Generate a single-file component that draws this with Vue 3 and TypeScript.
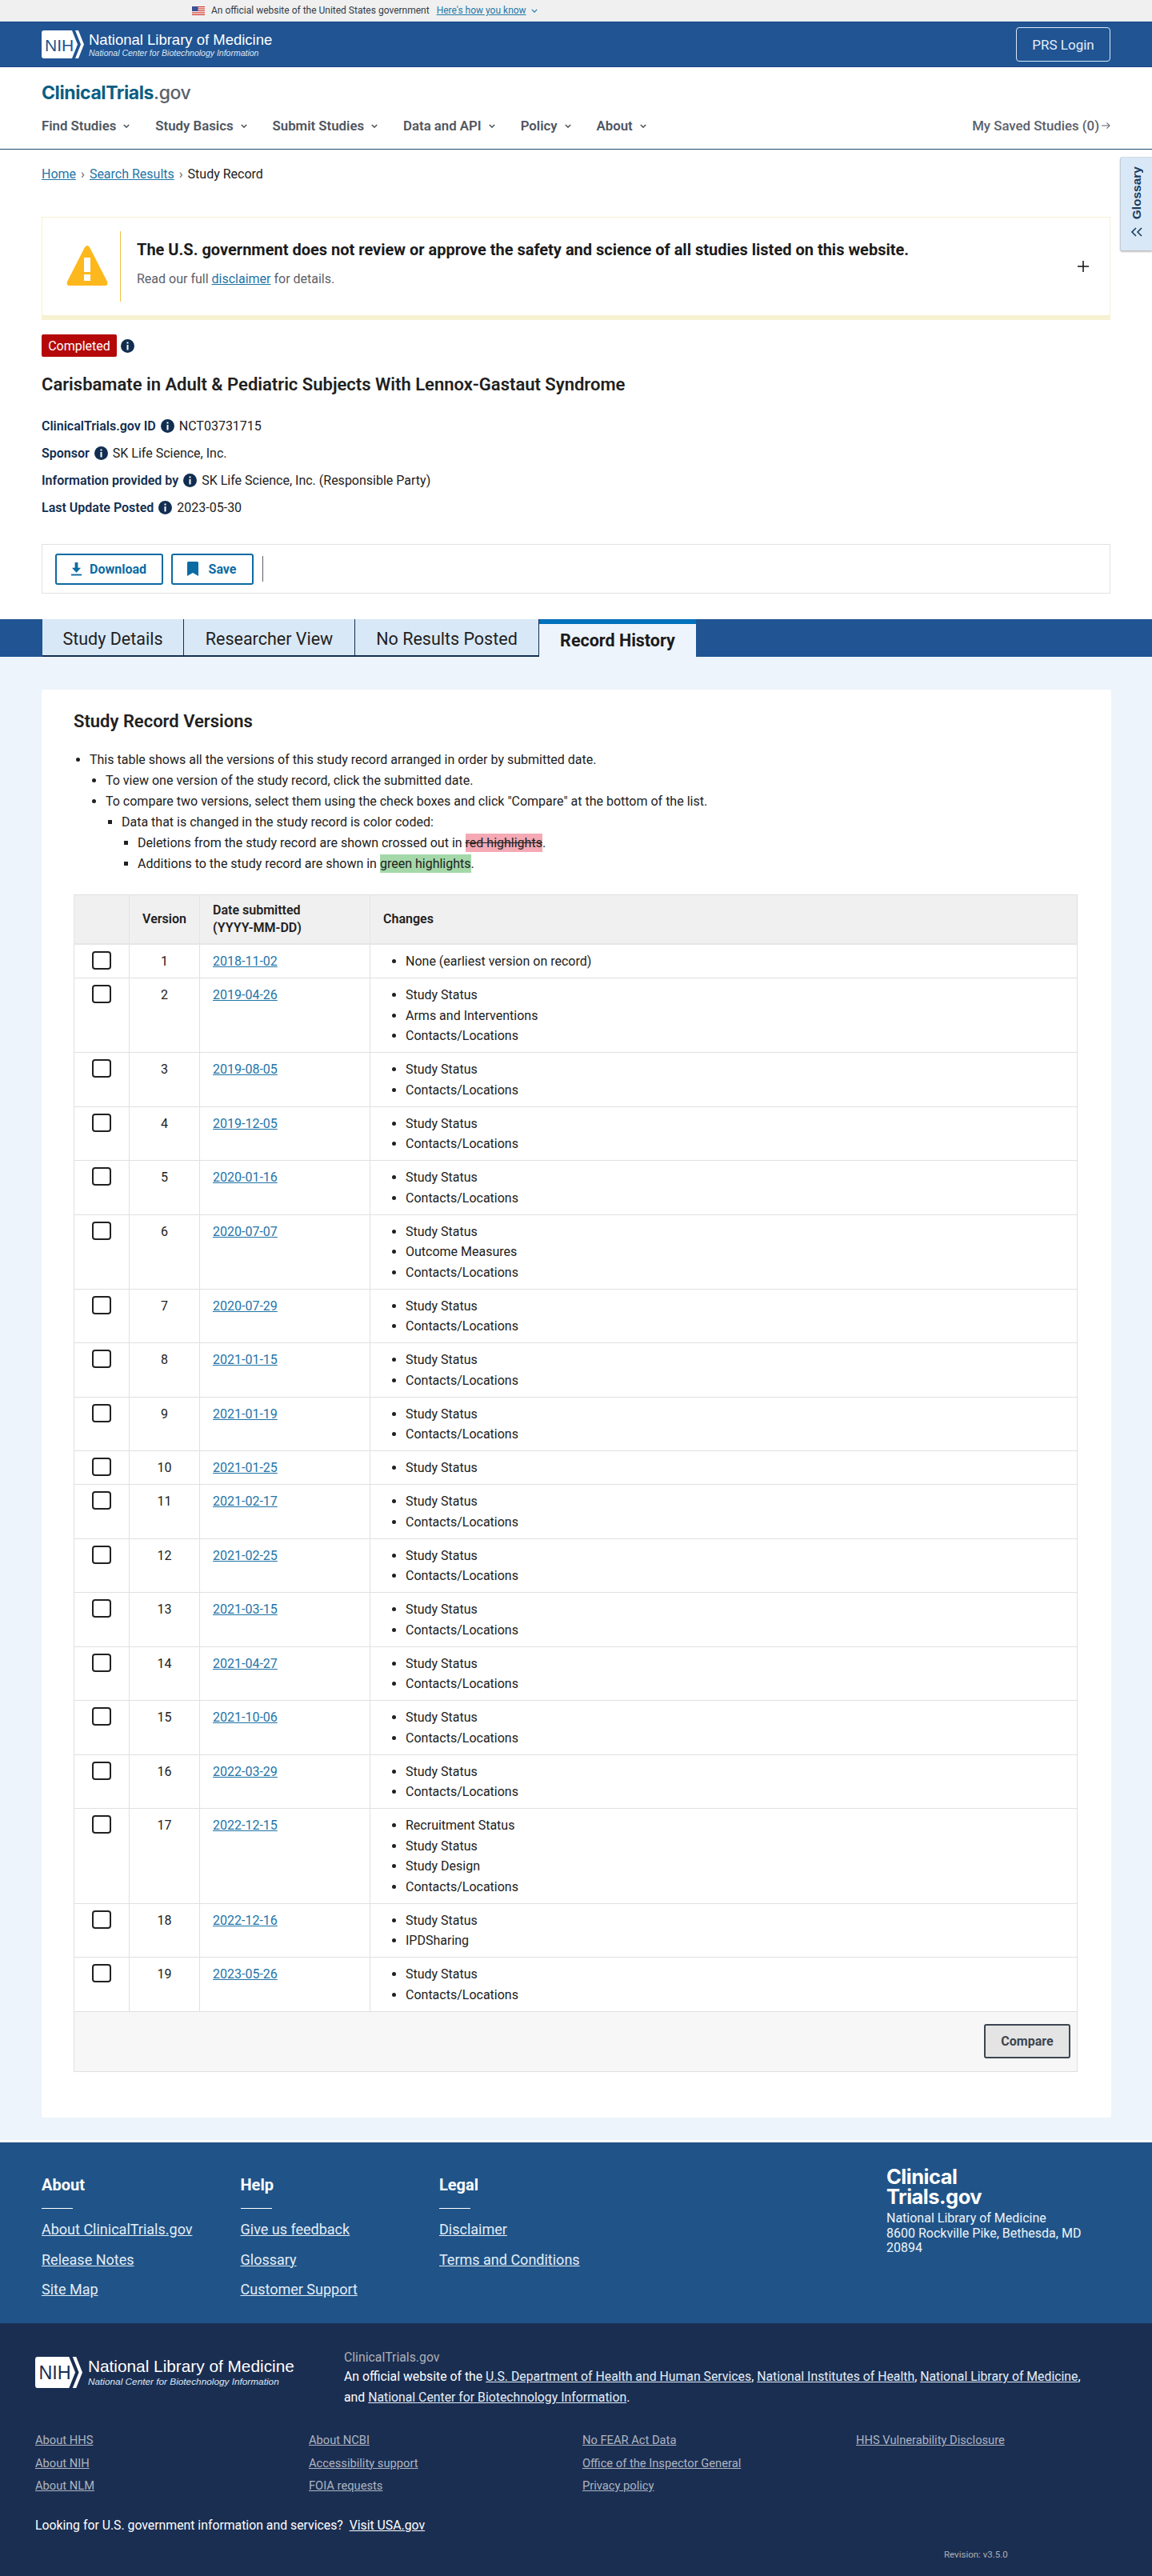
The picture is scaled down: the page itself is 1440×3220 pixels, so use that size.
<script setup lang="ts">
interface Version {
  date: string
  changes: string[]
}
const SS = 'Study Status'
const CL = 'Contacts/Locations'
const versions: Version[] = [
  { date: '2018-11-02', changes: ['None (earliest version on record)'] },
  { date: '2019-04-26', changes: [SS, 'Arms and Interventions', CL] },
  { date: '2019-08-05', changes: [SS, CL] },
  { date: '2019-12-05', changes: [SS, CL] },
  { date: '2020-01-16', changes: [SS, CL] },
  { date: '2020-07-07', changes: [SS, 'Outcome Measures', CL] },
  { date: '2020-07-29', changes: [SS, CL] },
  { date: '2021-01-15', changes: [SS, CL] },
  { date: '2021-01-19', changes: [SS, CL] },
  { date: '2021-01-25', changes: [SS] },
  { date: '2021-02-17', changes: [SS, CL] },
  { date: '2021-02-25', changes: [SS, CL] },
  { date: '2021-03-15', changes: [SS, CL] },
  { date: '2021-04-27', changes: [SS, CL] },
  { date: '2021-10-06', changes: [SS, CL] },
  { date: '2022-03-29', changes: [SS, CL] },
  { date: '2022-12-15', changes: ['Recruitment Status', SS, 'Study Design', CL] },
  { date: '2022-12-16', changes: [SS, 'IPDSharing'] },
  { date: '2023-05-26', changes: [SS, CL] },
]
const navItems = ['Find Studies', 'Study Basics', 'Submit Studies', 'Data and API', 'Policy', 'About']
const meta = [
  { label: 'ClinicalTrials.gov ID', value: 'NCT03731715' },
  { label: 'Sponsor', value: 'SK Life Science, Inc.' },
  { label: 'Information provided by', value: 'SK Life Science, Inc. (Responsible Party)' },
  { label: 'Last Update Posted', value: '2023-05-30' },
]
const footerCols = [
  { title: 'About', links: ['About ClinicalTrials.gov', 'Release Notes', 'Site Map'] },
  { title: 'Help', links: ['Give us feedback', 'Glossary', 'Customer Support'] },
  { title: 'Legal', links: ['Disclaimer', 'Terms and Conditions'] },
]
const nlmCols = [
  ['About HHS', 'About NIH', 'About NLM'],
  ['About NCBI', 'Accessibility support', 'FOIA requests'],
  ['No FEAR Act Data', 'Office of the Inspector General', 'Privacy policy'],
  ['HHS Vulnerability Disclosure'],
]
</script>

<template>
  <div class="page">
    <div class="gov-banner">
      <svg class="flag" viewBox="0 0 16 11" width="16" height="11">
        <rect width="16" height="11" fill="#fff" />
        <g fill="#c9352b">
          <rect width="16" height="1.2" />
          <rect y="2.45" width="16" height="1.2" />
          <rect y="4.9" width="16" height="1.2" />
          <rect y="7.35" width="16" height="1.2" />
          <rect y="9.8" width="16" height="1.2" />
        </g>
        <rect width="7.5" height="6" fill="#3b4f94" />
      </svg>
      <span class="gov-text">An official website of the United States government</span>
      <a class="gov-link">Here's how you know</a>
      <svg class="gov-chev" viewBox="0 0 10 6" width="8" height="5">
        <path d="M1 1l4 4 4-4" fill="none" stroke="#2378a8" stroke-width="1.6" />
      </svg>
    </div>

    <header class="nih-bar">
      <div class="nih-logo">
        <svg viewBox="0 0 53 35" width="53" height="35">
          <path d="M3 0H38L45 17.500L38 35H3Q0 35 0 32V3Q0 0 3 0Z" fill="#fff" />
          <path d="M42 0H46L53 17.500L46 35H42L49 17.500Z" fill="#fff" />
          <text x="4" y="25.500" font-family="Liberation Sans, sans-serif" font-size="21" fill="#205493">NIH</text>
        </svg>
        <div class="nih-words">
          <div class="nih-title">National Library of Medicine</div>
          <div class="nih-sub">National Center for Biotechnology Information</div>
        </div>
      </div>
      <a class="prs">PRS Login</a>
    </header>

    <div class="site-head">
      <div class="wordmark"><span class="wm-a">ClinicalTrials</span><span class="wm-b">.gov</span></div>
      <nav class="nav">
        <a v-for="n in navItems" :key="n" class="nav-item">
          {{ n }}
          <svg viewBox="0 0 10 6" width="8" height="5"><path d="M1 1l4 4 4-4" fill="none" stroke="#4a4f57" stroke-width="1.8" /></svg>
        </a>
        <a class="saved">My Saved Studies (0)
          <svg viewBox="0 0 12 10" width="11" height="10"><path d="M0 5h10M7 1l4 4-4 4" fill="none" stroke="#5b616b" stroke-width="1.1" /></svg>
        </a>
      </nav>
    </div>

    <div class="glossary">
      <span class="glossary-text">Glossary</span>
      <svg viewBox="0 0 16 12" width="16" height="12"><path d="M7 1L2 6l5 5M14 1L9 6l5 5" fill="none" stroke="#1a3a5c" stroke-width="1.6" /></svg>
    </div>

    <section class="record">
      <div class="crumbs">
        <a>Home</a><span class="sep">›</span><a>Search Results</a><span class="sep">›</span><span>Study Record</span>
      </div>

      <div class="alert">
        <div class="alert-icon">
          <svg viewBox="0 0 52 52" width="52" height="52">
            <path d="M26 2Q28 2 29.500 5L51 47Q52.500 52 48 52H4Q-0.500 52 1 47L22.500 5Q24 2 26 2Z" fill="#fdb81e" />
            <rect x="22" y="17" width="8" height="18" fill="#fff" />
            <rect x="22" y="38" width="8" height="8" fill="#fff" />
          </svg>
        </div>
        <div class="alert-body">
          <div class="alert-title">The U.S. government does not review or approve the safety and science of all studies listed on this website.</div>
          <div class="alert-text">Read our full <a>disclaimer</a> for details.</div>
        </div>
        <svg class="alert-plus" viewBox="0 0 14 14" width="14" height="14"><path d="M7 0v14M0 7h14" stroke="#111" stroke-width="1.500" /></svg>
      </div>

      <div class="status">
        <span class="badge">Completed</span>
        <svg class="info" viewBox="0 0 17 17" width="17" height="17"><circle cx="8.500" cy="8.500" r="8.500" fill="#112e51" /><rect x="7.500" y="3.500" width="2" height="2" fill="#fff" /><rect x="7.500" y="7" width="2" height="6.500" fill="#fff" /></svg>
      </div>

      <h1 class="title">Carisbamate in Adult &amp; Pediatric Subjects With Lennox-Gastaut Syndrome</h1>

      <div class="meta">
        <div v-for="m in meta" :key="m.label" class="meta-row">
          <b>{{ m.label }}</b>
          <svg class="info" viewBox="0 0 17 17" width="17" height="17"><circle cx="8.500" cy="8.500" r="8.500" fill="#112e51" /><rect x="7.500" y="3.500" width="2" height="2" fill="#fff" /><rect x="7.500" y="7" width="2" height="6.500" fill="#fff" /></svg>
          <span>{{ m.value }}</span>
        </div>
      </div>

      <div class="actions">
        <button class="act act-dl">
          <svg viewBox="0 0 16 18" width="15" height="17"><path d="M6 0h4v7h4l-6 6.500L2 7h4z" fill="#0b6ba3" /><rect x="1" y="15.500" width="14" height="2" fill="#0b6ba3" /></svg>
          Download
        </button>
        <button class="act act-save">
          <svg viewBox="0 0 14 18" width="14" height="18"><path d="M0 1.500Q0 0 1.500 0h11Q14 0 14 1.500V18l-7-4-7 4z" fill="#0b6ba3" /></svg>
          Save
        </button>
        <span class="act-div"></span>
      </div>
    </section>

    <div class="tabs">
      <a class="tab tab-1">Study Details</a>
      <a class="tab tab-2">Researcher View</a>
      <a class="tab tab-3">No Results Posted</a>
      <a class="tab tab-on">Record History</a>
    </div>

    <main class="main">
      <div class="card">
        <h2 class="card-title">Study Record Versions</h2>
        <ul class="l1">
          <li>This table shows all the versions of this study record arranged in order by submitted date.
            <ul class="l2">
              <li>To view one version of the study record, click the submitted date.</li>
              <li>To compare two versions, select them using the check boxes and click "Compare" at the bottom of the list.
                <ul class="l3">
                  <li>Data that is changed in the study record is color coded:
                    <ul class="l3">
                      <li>Deletions from the study record are shown crossed out in <del class="hl-red">red highlights</del>.</li>
                      <li>Additions to the study record are shown in <span class="hl-green">green highlights</span>.</li>
                    </ul>
                  </li>
                </ul>
              </li>
            </ul>
          </li>
        </ul>

        <table class="versions">
          <colgroup>
            <col class="c1" /><col class="c2" /><col class="c3" /><col />
          </colgroup>
          <thead>
            <tr>
              <th></th>
              <th class="center">Version</th>
              <th>Date submitted<br />(YYYY-MM-DD)</th>
              <th>Changes</th>
            </tr>
          </thead>
          <tbody>
            <tr v-for="(v, i) in versions" :key="v.date">
              <td class="chk"><span class="box"></span></td>
              <td class="center">{{ i + 1 }}</td>
              <td><a class="date">{{ v.date }}</a></td>
              <td><ul class="chg"><li v-for="c in v.changes" :key="c">{{ c }}</li></ul></td>
            </tr>
          </tbody>
          <tfoot>
            <tr>
              <td colspan="4" class="foot"><button class="compare">Compare</button></td>
            </tr>
          </tfoot>
        </table>
      </div>
    </main>

    <footer class="ft">
      <div class="ft-cols">
        <div v-for="c in footerCols" :key="c.title" class="ft-col">
          <div class="ft-h">{{ c.title }}</div>
          <div class="ft-rule"></div>
          <a v-for="l in c.links" :key="l" class="ft-link">{{ l }}</a>
        </div>
      </div>
      <div class="ft-addr">
        <div class="ft-mark">Clinical<br />Trials.gov</div>
        <div class="ft-lines">National Library of Medicine<br />8600 Rockville Pike, Bethesda, MD<br />20894</div>
      </div>
    </footer>

    <footer class="nlm">
      <div class="nlm-top">
        <div class="nlm-logo">
          <svg viewBox="0 0 53 35" width="59" height="39">
            <path d="M3 0H38L45 17.500L38 35H3Q0 35 0 32V3Q0 0 3 0Z" fill="#fff" />
            <path d="M42 0H46L53 17.500L46 35H42L49 17.500Z" fill="#fff" />
            <text x="4" y="25.500" font-family="Liberation Sans, sans-serif" font-size="21" fill="#1a2e52">NIH</text>
          </svg>
          <div class="nih-words">
            <div class="nlm-title">National Library of Medicine</div>
            <div class="nlm-sub">National Center for Biotechnology Information</div>
          </div>
        </div>
        <div class="nlm-about">
          <div class="nlm-ct">ClinicalTrials.gov</div>
          <div>An official website of the <a>U.S. Department of Health and Human Services</a>, <a>National Institutes of Health</a>, <a>National Library of Medicine</a>,</div>
          <div>and <a>National Center for Biotechnology Information</a>.</div>
        </div>
      </div>
      <div class="nlm-links">
        <div v-for="(col, i) in nlmCols" :key="i" class="nlm-col">
          <a v-for="l in col" :key="l">{{ l }}</a>
        </div>
      </div>
      <div class="nlm-usa">Looking for U.S. government information and services?&nbsp; <a>Visit USA.gov</a></div>
      <div class="nlm-rev">Revision: v3.5.0</div>
    </footer>
  </div>
</template>

<style>
html, body { margin: 0; padding: 0; background: #fff; }
</style>

<style scoped>
.page {
  position: relative;
  width: 1440px;
  font-family: Roboto, "Liberation Sans", sans-serif;
  font-size: 16px;
  color: #212121;
  overflow: hidden;
}
a { color: #1f74a7; text-decoration: underline; cursor: pointer; }

.gov-banner {
  height: 26px;
  background: #f0f0f0;
  border-bottom: 1px solid #d9e8f6;
  display: flex;
  align-items: center;
  padding-left: 240px;
  font-size: 12px;
  color: #323a45;
}
.gov-text { margin-left: 8px; }
.gov-link { margin-left: 9px; color: #2378a8; }
.gov-chev { margin-left: 6px; }

.nih-bar {
  height: 55px;
  background: #205493;
  border-top: 1px solid #1a4480;
  border-bottom: 1px solid #1a4480;
  display: flex;
  align-items: center;
  justify-content: space-between;
  padding: 0 52px;
}
.nih-logo { display: flex; align-items: center; gap: 6px; }
.nih-words { font-family: "Liberation Sans", Arial, sans-serif; color: #fff; }
.nih-title { font-size: 18.500px; line-height: 21px; font-weight: 400; }
.nih-sub { font-size: 10.500px; line-height: 13px; font-style: italic; color: #dce7f3; }
.prs {
  box-sizing: border-box;
  width: 118px;
  height: 43px;
  border: 1px solid #d9e8f6;
  border-radius: 4px;
  color: #e4eef8;
  font-size: 17px;
  display: flex;
  align-items: center;
  justify-content: center;
  text-decoration: none;
}

.site-head {
  height: 102px;
  border-bottom: 1px solid #1d4a6e;
  padding: 0 52px;
}
.wordmark {
  padding-top: 16px;
  height: 32px;
  line-height: 32px;
  font-family: Inter, "Open Sans", sans-serif;
  font-size: 23px;
  font-weight: 600;
  letter-spacing: -0.400px;
}
.wm-a { color: #0b5e82; font-weight: 700; }
.wm-b { color: #5b616b; font-weight: 500; }
.nav {
  display: flex;
  align-items: center;
  margin-top: 11px;
  height: 28px;
}
.nav-item {
  display: flex;
  align-items: center;
  gap: 9px;
  margin-right: 32px;
  font-size: 16.800px;
  font-weight: 600;
  color: #4f5660;
  text-decoration: none;
}
.saved {
  margin-left: auto;
  display: flex;
  align-items: center;
  gap: 3px;
  font-size: 16.800px;
  font-weight: 500;
  color: #5b616b;
  text-decoration: none;
}

.glossary {
  position: absolute;
  top: 196px;
  right: 0;
  box-sizing: border-box;
  width: 40px;
  height: 117px;
  background: #d9e8f6;
  border-top: 1px solid #cfd8e2;
  border-left: 1px solid #c4ccd6;
  box-shadow: 0 2px 2px rgba(0, 0, 0, 0.25);
  border-radius: 3px 0 0 3px;
  display: flex;
  flex-direction: column;
  align-items: center;
  gap: 10px;
  padding-top: 11px;
}
.glossary-text {
  writing-mode: vertical-rl;
  transform: rotate(180deg);
  font-size: 15.500px;
  font-weight: 700;
  font-family: "Liberation Sans", sans-serif;
  color: #1a3a5c;
}

.record { padding: 0 52px; }
.crumbs {
  height: 18px;
  line-height: 18px;
  padding-top: 22px;
  font-size: 16px;
  display: flex;
  align-items: center;
}
.sep { margin: 0 6px; color: #5b616b; }

.alert {
  box-sizing: border-box;
  height: 129px;
  margin-top: 44px;
  background: #fff;
  border: 1px solid #f5f1d0;
  border-bottom: 6px solid #f6f2d2;
  display: flex;
  align-items: flex-start;
  position: relative;
}
.alert-icon {
  box-sizing: border-box;
  width: 98px;
  height: 88px;
  margin-top: 17px;
  border-right: 1px solid #f0c040;
  display: flex;
  align-items: center;
  justify-content: center;
  padding-left: 15px;
  padding-bottom: 4px;
}
.alert-body { padding: 29px 0 0 20px; flex: 1; }
.alert-title { font-size: 20px; font-weight: 700; line-height: 22px; color: #1b1b1b; }
.alert-text { margin-top: 16px; font-size: 16px; line-height: 20px; color: #5b616b; }
.alert-plus { margin: 54px 26px 0 0; }

.status {
  display: flex;
  align-items: center;
  gap: 5px;
  margin-top: 18px;
  height: 28px;
}
.badge {
  box-sizing: border-box;
  width: 94px;
  height: 28px;
  background: #b50909;
  border-radius: 2px;
  color: #fff;
  font-size: 16px;
  display: flex;
  align-items: center;
  justify-content: center;
}
.info { flex: none; }
.title {
  margin: 20px 0 0;
  height: 30px;
  line-height: 30px;
  font-size: 22px;
  font-weight: 600;
  color: #212121;
}
.meta { margin-top: 19px; }
.meta-row {
  height: 34px;
  display: flex;
  align-items: center;
  gap: 6px;
  font-size: 16px;
}
.meta-row b { font-weight: 600; color: #112e51; }
.actions {
  box-sizing: border-box;
  height: 62px;
  margin-top: 29px;
  border: 1px solid #e2e2e2;
  display: flex;
  align-items: center;
  padding-left: 16px;
}
.act {
  box-sizing: border-box;
  height: 39px;
  background: #fff;
  border: 2px solid #0b6ba3;
  border-radius: 3px;
  color: #0b6ba3;
  font-family: inherit;
  font-size: 16px;
  font-weight: 700;
  display: flex;
  align-items: center;
  justify-content: center;
}
.act-dl { width: 135px; gap: 9px; padding-left: 4px; }
.act-save { width: 103px; gap: 13px; margin-left: 10px; padding-left: 4px; }
.act-div { width: 1px; height: 32px; background: #5b616b; margin-left: 11px; }

.tabs {
  margin-top: 32px;
  height: 47px;
  background: #205493;
  display: flex;
  padding-left: 53px;
  box-sizing: border-box;
}
.tab {
  box-sizing: border-box;
  height: 47px;
  background: #d9e8f6;
  border-right: 1px solid #112e51;
  border-bottom: 2px solid #112e51;
  color: #212121;
  font-size: 21.500px;
  display: flex;
  align-items: center;
  justify-content: center;
  text-decoration: none;
  padding-top: 4px;
}
.tab-1 { width: 177px; }
.tab-2 { width: 214px; }
.tab-3 { width: 230px; }
.tab-on {
  width: 196px;
  background: #eef4fb;
  border: 0;
  border-top: 6px solid #0071bc;
  font-weight: 700;
  padding-top: 0;
  color: #1b1b1b;
}

.main {
  background: #eef4fb;
  padding: 41px 52px 28px;
  height: 1785px;
}
.card {
  box-sizing: border-box;
  background: #fff;
  width: 1337px;
  height: 1785px;
  padding: 24px 40px 0;
  border-radius: 3px;
}
.card-title {
  margin: 0;
  height: 32px;
  line-height: 32px;
  font-size: 22px;
  font-weight: 600;
  color: #212121;
}
ul { margin: 0; padding: 0; }
.l1 { margin-top: 19px; padding-left: 20px; list-style: disc; font-size: 16px; line-height: 26px; }
.l2 { padding-left: 20px; list-style: disc; }
.l3 { padding-left: 20px; list-style: square; }
.hl-red { background: #f4a9b5; text-decoration: line-through; padding: 2px 0; }
.hl-green { background: #a4d8a9; padding: 2px 0; }

.versions {
  margin-top: 25px;
  width: 1255px;
  table-layout: fixed;
  border-collapse: collapse;
  font-size: 16px;
  border: 1px solid #e0e0e0;
}
.c1 { width: 69px; }
.c2 { width: 88px; }
.c3 { width: 213px; }
th {
  height: 60px;
  background: #f0f0f0;
  border-left: 1px solid #e4e4e4;
  border-bottom: 2px solid #e6e6e6;
  text-align: left;
  padding: 0 16px;
  font-weight: 600;
  line-height: 22.500px;
  color: #212121;
}
th.center, td.center { text-align: center; padding-left: 0; padding-right: 0; }
td {
  border: 1px solid #e0e0e0;
  border-width: 1px 0 0 1px;
  vertical-align: top;
  padding: 8px 16px 7.500px;
  line-height: 25.500px;
}
tbody tr:first-child td { border-top: 0; }
.chk { padding: 8px 0 0 22px; }
.box {
  display: block;
  box-sizing: border-box;
  width: 24px;
  height: 23px;
  border: 2px solid #212121;
  border-radius: 4px;
}
.date { color: #1f74a7; }
.chg { padding-left: 28px; list-style: disc; }
.foot {
  background: #f7f7f7;
  height: 75px;
  padding: 15px 8px 0 0;
  text-align: right;
  border-left: 0;
  box-sizing: border-box;
}
.compare {
  box-sizing: border-box;
  width: 108px;
  height: 43px;
  background: #e4e4e4;
  border: 2px solid #3d4551;
  border-radius: 3px;
  font-family: inherit;
  font-size: 16px;
  font-weight: 700;
  color: #3d4551;
}

.ft {
  border-top: 3px solid #fff;
  height: 226px;
  background: #205488;
  display: flex;
  color: #fff;
  padding-left: 52px;
}
.ft-cols { display: flex; width: 1056px; padding-top: 41px; }
.ft-col { width: 248.500px; display: flex; flex-direction: column; align-items: flex-start; }
.ft-h { font-size: 20px; font-weight: 700; line-height: 24px; }
.ft-rule { width: 39px; height: 1px; background: #fff; margin: 17px 0 15px; }
.ft-link { color: #e4eef8; font-size: 18px; line-height: 22px; margin-bottom: 15.500px; }
.ft-addr { padding-top: 30px; }
.ft-mark {
  font-family: Inter, "Open Sans", sans-serif;
  font-weight: 700;
  font-size: 25.500px;
  line-height: 25px;
  letter-spacing: -0.500px;
}
.ft-lines { margin-top: 6px; font-size: 16px; line-height: 18.500px; color: #eef4fb; }

.nlm {
  position: relative;
  background: #1a2e52;
  height: 316px;
  padding-left: 44px;
  color: #fff;
}
.nlm-top { display: flex; padding-top: 32px; }
.nlm-logo { display: flex; align-items: center; gap: 7px; width: 386px; height: 39px; margin-top: 10px; }
.nlm-title { font-size: 20.800px; line-height: 24px; }
.nlm-sub { font-size: 11.800px; line-height: 15px; font-style: italic; color: #dce7f3; }
.nlm-about { font-size: 15.800px; line-height: 26px; color: #fff; }
.nlm-about a { color: #e4eef8; }
.nlm-ct { color: #aeb0b5; line-height: 22px; }
.nlm-links { display: flex; margin-top: 26px; }
.nlm-col { width: 342px; display: flex; flex-direction: column; align-items: flex-start; }
.nlm-col a { color: #aeb5c0; font-size: 14.700px; line-height: 28.500px; }
.nlm-usa { margin-top: 24px; font-size: 15.800px; line-height: 22px; color: #fff; }
.nlm-usa a { color: #fff; }
.nlm-rev { position: absolute; left: 1180px; top: 282px; font-size: 11.500px; color: #aeb0b5; }
</style>
